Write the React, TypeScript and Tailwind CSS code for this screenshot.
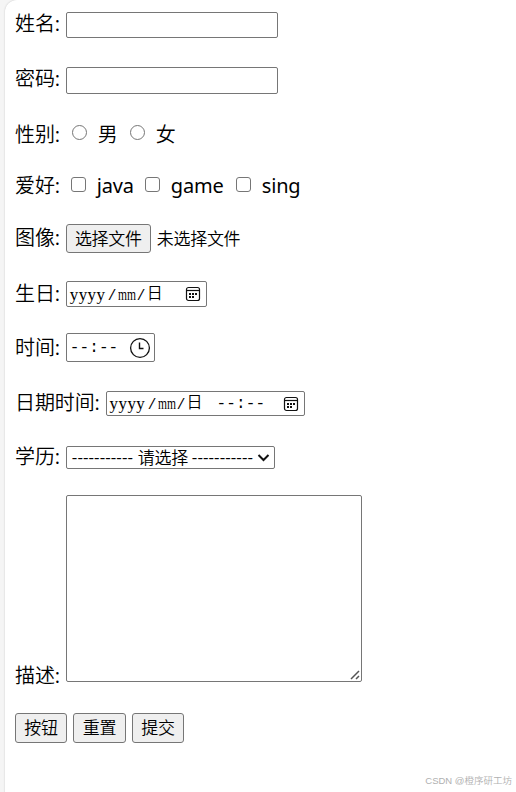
import type { ReactNode } from 'react';

const hobbies = [
  { label: 'java', width: 'w-[37px] mr-[11px]' },
  { label: 'game', width: 'w-[54px] mr-[11px]' },
  { label: 'sing', width: 'w-[40px]' },
];

const box = 'border border-[#767676] rounded-[2px] bg-white';
const button =
  'border border-[#767676] rounded-[3px] bg-[#efefef] pb-[3px] text-[17px] tracking-[-0.3px] leading-none';

type RowProps = { label: string; className: string; labelClass?: string; children: ReactNode };

function Row({ label, className, labelClass = 'pb-[2px]', children }: RowProps) {
  return (
    <div className={`flex items-center ${className}`}>
      <label className={`mr-[6px] shrink-0 whitespace-nowrap text-[20px] leading-none tracking-[-0.1px] ${labelClass}`}>
        {label}
        <span className="inline-block w-[5px] font-['Open_Sans'] font-normal">:</span>
      </label>
      {children}
    </div>
  );
}

function CalendarIcon() {
  return (
    <svg width="16" height="16" viewBox="0 0 16 16" fill="none" stroke="#111" strokeWidth="1.2">
      <rect x="1.5" y="1.5" width="13" height="13" rx="2" />
      <path d="M1.5 4.5h13" />
      <path d="M4 8h2M7 8h2M10 8h2M4 11h2M7 11h2" strokeWidth="1.8" />
    </svg>
  );
}

function ClockIcon() {
  return (
    <svg width="22" height="22" viewBox="0 0 22 22" fill="none" stroke="#111" strokeWidth="1.3">
      <circle cx="11" cy="11" r="9.4" />
      <path d="M10.5 5.5v6h4" strokeWidth="1.4" />
    </svg>
  );
}

function DateText() {
  return (
    <span className="flex items-center font-['Liberation_Serif','Noto_Sans_CJK_SC',serif] text-[17px] leading-none">
      <span className="w-[37px] tracking-[0.4px]">yyyy</span>
      <span className="w-[11px] origin-left scale-x-150 pl-px">/</span>
      <span className="w-[18px] origin-left scale-x-[0.68]">mm</span>
      <span className="w-[11px] origin-left scale-x-150 pl-px">/</span>
      <span className="w-[17px] pb-px text-[16px]">日</span>
    </span>
  );
}

function TimeText() {
  return (
    <span className="font-['Liberation_Mono',monospace] text-[16px] leading-none tracking-[0.1px]">--:--</span>
  );
}

export default function App() {
  return (
    <div className="h-[792px] overflow-hidden bg-[#f5f5f5] pl-[5px] font-['Noto_Sans_CJK_SC',sans-serif] font-[350] text-black">
      <div className="relative h-[800px] rounded-tl-[12px] bg-white pl-[10px] pt-[12px] shadow-[0_0_2px_rgba(0,0,0,0.2)]">
        <Row label="姓名" className="h-[26px]" labelClass="pb-[4px]">
          <input type="text" className={`h-[26px] w-[212px] ${box}`} />
        </Row>
        <Row label="密码" className="mt-[29px] h-[27px]" labelClass="pb-[4px]">
          <input type="password" className={`h-[27px] w-[212px] ${box}`} />
        </Row>

        <Row label="性别" className="mt-[30px] h-[20px]" labelClass="pb-0">
          {['男', '女'].map((gender) => (
            <span key={gender} className="ml-[6px] mr-[6px] flex items-center text-[20px] leading-none">
              <input
                type="radio"
                name="gender"
                className="mb-[4px] mr-[11px] size-[15px] appearance-none rounded-full border border-[#767676]"
              />
              {gender}
            </span>
          ))}
        </Row>

        <Row label="爱好" className="mt-[32px] h-[20px]" labelClass="pb-px">
          <div className="ml-[5px] flex items-center">
            {hobbies.map((hobby) => (
              <span key={hobby.label} className="flex items-center text-[20px] leading-none">
                <input
                  type="checkbox"
                  className="mb-[4px] mr-[11px] size-[15px] appearance-none rounded-[3px] border border-[#767676]"
                />
                <span className={`font-['Noto_Sans'] font-normal tracking-[-0.2px] ${hobby.width}`}>
                  {hobby.label}
                </span>
              </span>
            ))}
          </div>
        </Row>

        <Row label="图像" className="mt-[28px] h-[29px]" labelClass="pb-[2px]">
          <button className={`h-[29px] w-[85px] ${button}`}>选择文件</button>
          <span className="ml-[6px] pb-[2px] text-[17px] leading-none tracking-[-0.3px]">未选择文件</span>
        </Row>

        <Row label="生日" className="mt-[28px] h-[26px]">
          <div className={`flex h-[26px] w-[141px] items-center justify-between pl-[3px] pr-[5px] ${box}`}>
            <DateText />
            <CalendarIcon />
          </div>
        </Row>

        <Row label="时间" className="mt-[26px] h-[29px]" labelClass="pb-px">
          <div className={`flex h-[29px] w-[89px] items-center justify-between pl-[3px] pr-[3px] ${box}`}>
            <TimeText />
            <ClockIcon />
          </div>
        </Row>

        <Row label="日期时间" className="mt-[29px] h-[25px]">
          <div className={`flex h-[25px] w-[199px] items-center pl-[3px] pr-[5px] ${box}`}>
            <DateText />
            <span className="ml-[13px] mr-auto flex">
              <TimeText />
            </span>
            <CalendarIcon />
          </div>
        </Row>

        <Row label="学历" className="mt-[30px] h-[23px]">
          <div className={`flex h-[23px] w-[209px] items-center justify-between pl-[5px] pr-[4px] ${box}`}>
            <span className="flex items-center whitespace-nowrap pb-[2px] text-[17px] leading-none tracking-[-0.3px]">
              <span className="w-[66px] font-['Open_Sans'] font-normal tracking-[0.1px]">-----------</span>
              <span className="w-[54px]">请选择</span>
              <span className="w-[62px] font-['Open_Sans'] font-normal tracking-[0.1px]">-----------</span>
            </span>
            <svg width="13" height="9" viewBox="0 0 13 9" fill="none" stroke="#111" strokeWidth="2">
              <path d="M1.5 2l5 5 5-5" />
            </svg>
          </div>
        </Row>

        <Row label="描述" className="mt-[26px] h-[187px] items-end" labelClass="-mb-[4px]">
          <div className={`flex h-[187px] w-[296px] items-end justify-end p-px ${box}`}>
            <svg width="10" height="10" viewBox="0 0 10 10" fill="none" stroke="#555" strokeWidth="1.5">
              <path d="M1 9l8-8M6 9l3-3" />
            </svg>
          </div>
        </Row>

        <div className="mt-[31px] flex gap-[6px]">
          <button className={`h-[30px] w-[52px] ${button}`}>按钮</button>
          <button className={`h-[30px] w-[53px] ${button}`}>重置</button>
          <button className={`h-[30px] w-[52px] ${button}`}>提交</button>
        </div>

        <span className="absolute right-[4px] top-[776px] whitespace-nowrap font-['Liberation_Sans','Noto_Sans_CJK_SC',sans-serif] text-[9.5px] leading-none text-[#b0b0b0]">
          CSDN @橙序研工坊
        </span>
      </div>
    </div>
  );
}
